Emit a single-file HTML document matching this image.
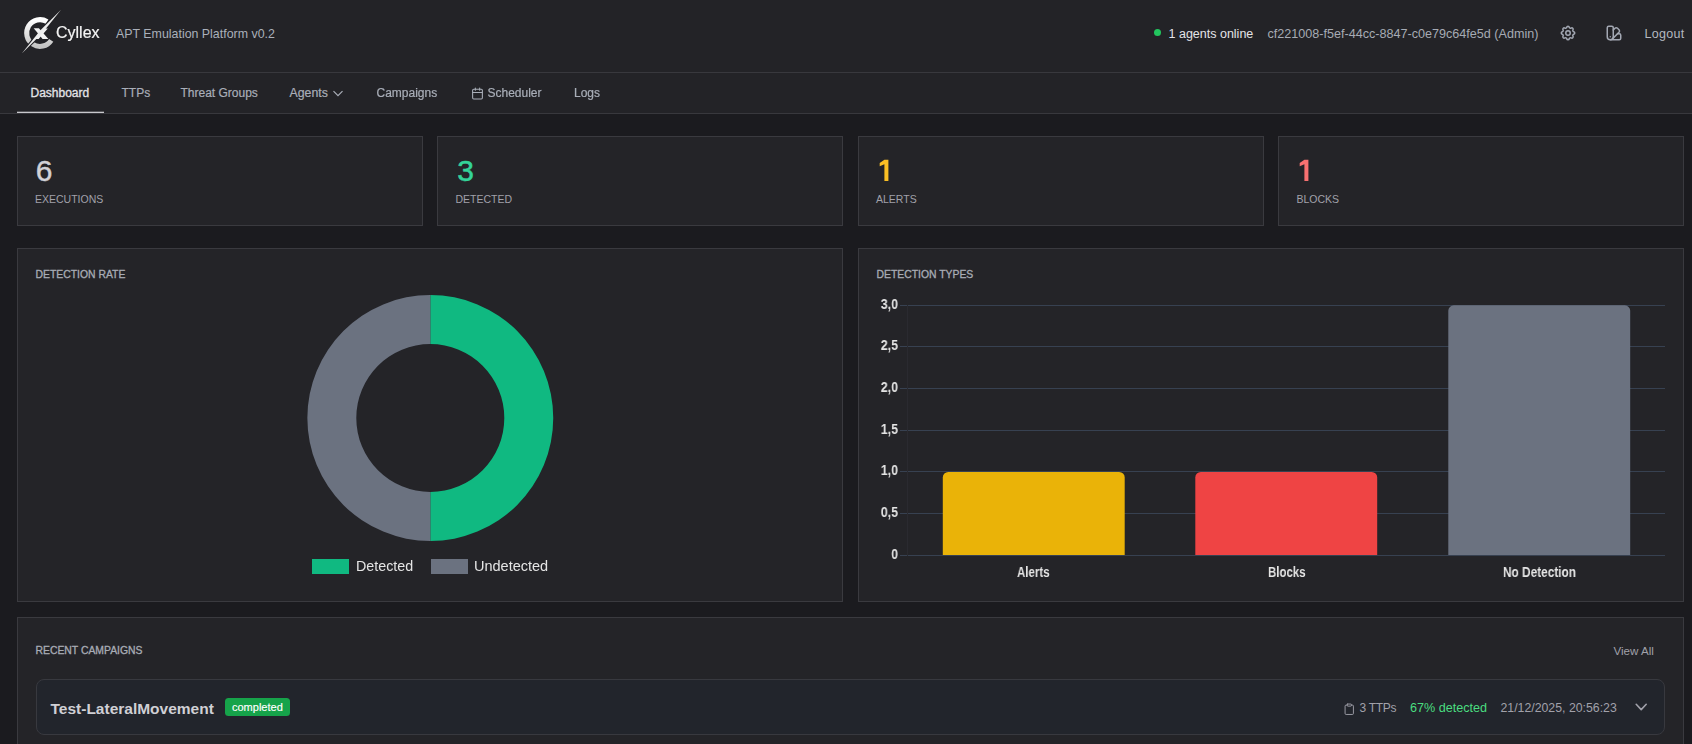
<!DOCTYPE html>
<html><head><meta charset="utf-8">
<style>
*{margin:0;padding:0;box-sizing:border-box}
html,body{width:1692px;height:744px;overflow:hidden;background:#1b1b1f;font-family:"Liberation Sans",sans-serif;}
#hdr{position:absolute;left:0;top:0;width:1692px;height:73px;background:#232327;border-bottom:1px solid #38383d}
#nav{position:absolute;left:0;top:73px;width:1692px;height:41px;background:#232327;border-bottom:1px solid #38383d}
.card{position:absolute;background:#242428;border:1px solid #3a3a3f}
.t{position:absolute;white-space:nowrap;line-height:1}
svg{position:absolute;overflow:visible}
</style></head><body>
<div id="hdr"></div>
<div id="nav"></div>

<!-- logo -->
<svg style="left:0;top:0" width="70" height="60" viewBox="0 0 70 60">
  <defs>
    <linearGradient id="lg" x1="0" y1="0" x2="0" y2="1">
      <stop offset="0" stop-color="#ffffff"/>
      <stop offset="1" stop-color="#c4c4c4"/>
    </linearGradient>
  </defs>
  <path d="M47.07 21.68 A13.35 13.35 0 1 0 51.2 40.27" fill="none" stroke="url(#lg)" stroke-width="5"/>
  <path d="M21.8 53.5 L42.6 32.8 L61 9.8 L40.2 30.5 Z" fill="none" stroke="#232327" stroke-width="2.2" stroke-linejoin="round"/>
  <path d="M33.7 28.3 L38.9 28.3 L48.4 38.9 L42.6 38.9 Z" fill="#f4f4f4"/>
  <path d="M34.2 38.9 L38.6 38.9 L47.8 28.4 L43.4 28.4 Z" fill="#f4f4f4"/>
  <path d="M21.8 53.5 L42.6 32.8 L61 9.8 L40.2 30.5 Z" fill="#eeeeee"/>
</svg>
<div class="t" id="t_cyllex" style="will-change:transform;left:55.7px;top:24.5px;font-size:16px;color:#f4f4f4;-webkit-text-stroke:0.2px #f4f4f4">Cyllex</div>
<div class="t" id="t_apt" style="left:116px;top:27.5px;font-size:12.4px;color:#aab0ba">APT Emulation Platform v0.2</div>

<!-- header right -->
<div style="position:absolute;left:1154px;top:29px;width:7px;height:7px;border-radius:50%;background:#22c55e"></div>
<div class="t" id="t_online" style="left:1168.5px;top:27.5px;font-size:12.5px;color:#e4e4e7">1 agents online</div>
<div class="t" id="t_uuid" style="left:1267.5px;top:27.5px;font-size:12.6px;color:#a6abb4">cf221008-f5ef-44cc-8847-c0e79c64fe5d (Admin)</div>
<!-- gear (tabler settings) -->
<svg style="left:1559px;top:24px" width="18" height="18" viewBox="0 0 24 24" fill="none" stroke="#a3a8b3" stroke-width="2" stroke-linecap="round" stroke-linejoin="round">
  <path d="M10.325 4.317c.426 -1.756 2.924 -1.756 3.35 0a1.724 1.724 0 0 0 2.573 1.066c1.543 -.94 3.31 .826 2.37 2.37a1.724 1.724 0 0 0 1.065 2.572c1.756 .426 1.756 2.924 0 3.35a1.724 1.724 0 0 0 -1.066 2.573c.94 1.543 -.826 3.31 -2.37 2.37a1.724 1.724 0 0 0 -2.572 1.065c-.426 1.756 -2.924 1.756 -3.35 0a1.724 1.724 0 0 0 -2.573 -1.066c-1.543 .94 -3.31 -.826 -2.37 -2.37a1.724 1.724 0 0 0 -1.065 -2.572c-1.756 -.426 -1.756 -2.924 0 -3.35a1.724 1.724 0 0 0 1.066 -2.573c-.94 -1.543 .826 -3.31 2.37 -2.37c1 .608 2.296 .07 2.572 -1.065z"/>
  <path d="M9 12a3 3 0 1 0 6 0a3 3 0 0 0 -6 0"/>
</svg>
<!-- swatch book (lucide) -->
<svg style="left:1605px;top:24px" width="18" height="18" viewBox="0 0 24 24" fill="none" stroke="#a3a8b3" stroke-width="2" stroke-linecap="round" stroke-linejoin="round">
  <path d="M11 17a4 4 0 0 1-8 0V5a2 2 0 0 1 2-2h4a2 2 0 0 1 2 2Z"/>
  <path d="M16.7 13H19a2 2 0 0 1 2 2v4a2 2 0 0 1-2 2H7"/>
  <path d="M7 17h.01"/>
  <path d="m11 8 2.3-2.3a2.4 2.4 0 0 1 3.404.004L18.6 7.6a2.4 2.4 0 0 1 .026 3.434L9.9 19.8"/>
</svg>
<div class="t" id="t_logout" style="left:1644.5px;top:27.8px;font-size:12.5px;letter-spacing:0.3px;color:#b4b8c0">Logout</div>

<!-- nav -->
<div class="t" id="n_dash" style="left:30.5px;top:86.8px;font-size:12px;color:#e4e4e7;-webkit-text-stroke:0.3px #e4e4e7">Dashboard</div>
<div style="position:absolute;left:17px;top:111px;width:87px;height:2px;background:linear-gradient(rgba(200,200,204,.3) 50%,#c8c8cc 50%)"></div>
<div class="t" id="n_ttps" style="-webkit-text-stroke:0.2px #a9aeb8;left:121.5px;top:86.8px;font-size:12px;color:#a9aeb8">TTPs</div>
<div class="t" id="n_tg" style="-webkit-text-stroke:0.2px #a9aeb8;left:180.5px;top:86.8px;font-size:12px;color:#a9aeb8">Threat Groups</div>
<div class="t" id="n_ag" style="-webkit-text-stroke:0.2px #a9aeb8;left:289.5px;top:86.8px;font-size:12.3px;color:#a9aeb8">Agents</div>
<svg style="left:0;top:0" width="1" height="1"><polyline points="333.5,91.2 338,95.7 342.5,91.2" fill="none" stroke="#a9aeb8" stroke-width="1.2"/></svg>
<div class="t" id="n_camp" style="-webkit-text-stroke:0.2px #a9aeb8;left:376.5px;top:86.8px;font-size:12px;color:#a9aeb8">Campaigns</div>
<svg style="left:470.5px;top:86.8px" width="13" height="13" viewBox="0 0 24 24" fill="none" stroke="#a9aeb8" stroke-width="2" stroke-linecap="round" stroke-linejoin="round">
  <path d="M8 2v4"/><path d="M16 2v4"/><rect width="18" height="18" x="3" y="4" rx="2"/><path d="M3 10h18"/>
</svg>
<div class="t" id="n_sch" style="-webkit-text-stroke:0.2px #a9aeb8;left:487.5px;top:86.8px;font-size:12px;color:#a9aeb8">Scheduler</div>
<div class="t" id="n_logs" style="-webkit-text-stroke:0.2px #a9aeb8;left:574px;top:86.8px;font-size:12px;color:#a9aeb8">Logs</div>

<!-- stat cards -->
<div class="card" style="left:17px;top:136px;width:406px;height:90px"></div>
<div class="card" style="left:437px;top:136px;width:406px;height:90px"></div>
<div class="card" style="left:858px;top:136px;width:406px;height:90px"></div>
<div class="card" style="left:1278px;top:136px;width:406px;height:90px"></div>
<div class="t" id="s1n" style="left:35.8px;top:156px;font-size:30px;color:#d2d2d7;-webkit-text-stroke:0.45px #d2d2d7">6</div>
<div class="t" id="s2n" style="left:457.3px;top:156px;font-size:30px;color:#34d399;-webkit-text-stroke:0.5px #34d399">3</div>
<svg style="left:0;top:0" width="1" height="1">
  <path d="M884.4 159.8 H888.4 V181 H884.4 V164.2 L879.7 166.3 V162.9 Z" fill="#fbbf24"/>
  <path d="M1304.4 159.8 H1308.4 V181 H1304.4 V164.2 L1299.7 166.3 V162.9 Z" fill="#f87171"/>
</svg>
<div class="t" id="s1l" style="left:35px;top:194px;font-size:10.5px;color:#a1a1aa">EXECUTIONS</div>
<div class="t" id="s2l" style="left:455.5px;top:194px;font-size:10.5px;color:#a1a1aa">DETECTED</div>
<div class="t" id="s3l" style="left:876px;top:194px;font-size:10.5px;color:#a1a1aa">ALERTS</div>
<div class="t" id="s4l" style="left:1296.5px;top:194px;font-size:10.5px;color:#a1a1aa">BLOCKS</div>

<!-- chart cards -->
<div class="card" style="left:17px;top:248px;width:826px;height:354px"></div>
<div class="card" style="left:858px;top:248px;width:826px;height:354px"></div>
<div class="t" id="c1t" style="left:35.5px;top:270px;font-size:10.4px;color:#a8acb5;-webkit-text-stroke:0.3px #a8acb5">DETECTION RATE</div>
<div class="t" id="c2t" style="left:876.5px;top:270px;font-size:10.4px;color:#a8acb5;-webkit-text-stroke:0.3px #a8acb5">DETECTION TYPES</div>

<!-- donut -->
<svg style="left:0;top:0" width="1" height="1">
  <path d="M430.3 295 A123 123 0 0 1 430.3 541 L430.3 492 A74 74 0 0 0 430.3 344 Z" fill="#10b981"/>
  <path d="M430.3 541 A123 123 0 0 1 430.3 295 L430.3 344 A74 74 0 0 0 430.3 492 Z" fill="#6b7280"/>
</svg>
<div style="position:absolute;left:312px;top:559px;width:36.5px;height:14.5px;background:#10b981"></div>
<div class="t" id="lg1" style="will-change:transform;left:355.5px;top:558.5px;font-size:14.3px;color:#e5e5e5">Detected</div>
<div style="position:absolute;left:431px;top:559px;width:36.5px;height:14.5px;background:#6b7280"></div>
<div class="t" id="lg2" style="will-change:transform;left:474px;top:558.5px;font-size:14.5px;color:#e5e5e5">Undetected</div>

<!-- bar chart -->
<svg style="left:0;top:0" width="1" height="1">
  <g stroke="#374151" stroke-width="1">
    <line x1="900" y1="305.5" x2="1665" y2="305.5"/>
    <line x1="900" y1="346.5" x2="1665" y2="346.5"/>
    <line x1="900" y1="388.5" x2="1665" y2="388.5"/>
    <line x1="900" y1="430.5" x2="1665" y2="430.5"/>
    <line x1="900" y1="471.5" x2="1665" y2="471.5"/>
    <line x1="900" y1="513.5" x2="1665" y2="513.5"/>
    <line x1="900" y1="555.5" x2="1665" y2="555.5"/>
  </g>
  <line x1="907.5" y1="305" x2="907.5" y2="556" stroke="#2a2a30" stroke-width="1"/>
  <path d="M942.8 555 V477.5 a5.5 5.5 0 0 1 5.5 -5.5 H1119.2 a5.5 5.5 0 0 1 5.5 5.5 V555 Z" fill="#eab308"/>
  <path d="M1195.3 555 V477.5 a5.5 5.5 0 0 1 5.5 -5.5 H1371.7 a5.5 5.5 0 0 1 5.5 5.5 V555 Z" fill="#ef4444"/>
  <path d="M1448.3 555 V310.8 a5.5 5.5 0 0 1 5.5 -5.5 H1624.7 a5.5 5.5 0 0 1 5.5 5.5 V555 Z" fill="#6b7280"/>
</svg>
<div class="t" id="y30" style="will-change:transform;left:857.5px;width:40px;text-align:right;top:297.3px;font-size:14px;font-weight:700;color:#e5e5e5;transform:scaleX(.88);transform-origin:100% 0">3,0</div>
<div class="t" id="y25" style="will-change:transform;left:857.5px;width:40px;text-align:right;top:338.3px;font-size:14px;font-weight:700;color:#e5e5e5;transform:scaleX(.88);transform-origin:100% 0">2,5</div>
<div class="t" id="y20" style="will-change:transform;left:857.5px;width:40px;text-align:right;top:380.3px;font-size:14px;font-weight:700;color:#e5e5e5;transform:scaleX(.88);transform-origin:100% 0">2,0</div>
<div class="t" id="y15" style="will-change:transform;left:857.5px;width:40px;text-align:right;top:422.3px;font-size:14px;font-weight:700;color:#e5e5e5;transform:scaleX(.88);transform-origin:100% 0">1,5</div>
<div class="t" id="y10" style="will-change:transform;left:857.5px;width:40px;text-align:right;top:463.3px;font-size:14px;font-weight:700;color:#e5e5e5;transform:scaleX(.88);transform-origin:100% 0">1,0</div>
<div class="t" id="y05" style="will-change:transform;left:857.5px;width:40px;text-align:right;top:505.3px;font-size:14px;font-weight:700;color:#e5e5e5;transform:scaleX(.88);transform-origin:100% 0">0,5</div>
<div class="t" id="y00" style="will-change:transform;left:857.5px;width:40px;text-align:right;top:547.3px;font-size:14px;font-weight:700;color:#e5e5e5;transform:scaleX(.88);transform-origin:100% 0">0</div>
<div class="t" id="xa" style="will-change:transform;left:1017px;top:565px;font-size:14px;font-weight:700;color:#e5e5e5;transform:scaleX(.82);transform-origin:0 0">Alerts</div>
<div class="t" id="xb" style="will-change:transform;left:1267.5px;top:565px;font-size:14px;font-weight:700;color:#e5e5e5;transform:scaleX(.82);transform-origin:0 0">Blocks</div>
<div class="t" id="xc" style="will-change:transform;left:1503px;top:565px;font-size:14px;font-weight:700;color:#e5e5e5;transform:scaleX(.845);transform-origin:0 0">No Detection</div>

<!-- recent -->
<div class="card" style="left:17px;top:617px;width:1667px;height:140px"></div>
<div class="t" id="rt" style="left:35.5px;top:646px;font-size:10.4px;color:#a8acb5;-webkit-text-stroke:0.3px #a8acb5">RECENT CAMPAIGNS</div>
<div class="t" id="va" style="left:1613.5px;top:644.5px;font-size:11.6px;color:#a1a1aa">View All</div>
<div style="position:absolute;left:36px;top:679px;width:1629px;height:56px;border-radius:8px;background:#22252c;border:1px solid #38393f"></div>
<div class="t" id="rn" style="left:50.5px;top:700.8px;font-size:15.5px;font-weight:700;color:#d0d0d5">Test-LateralMovement</div>
<div style="position:absolute;left:225px;top:698px;width:65px;height:18px;border-radius:3.5px;background:#16a34a"></div>
<div class="t" id="bd" style="left:232px;top:701.8px;font-size:11px;color:#ffffff;-webkit-text-stroke:0.15px #fff">completed</div>
<svg style="left:1343px;top:702.6px" width="12.5" height="12.5" viewBox="0 0 24 24" fill="none" stroke="#a1a1aa" stroke-width="1.8" stroke-linecap="round" stroke-linejoin="round">
  <rect width="8" height="4" x="8" y="2" rx="1" ry="1"/><path d="M16 4h2a2 2 0 0 1 2 2v14a2 2 0 0 1-2 2H6a2 2 0 0 1-2-2V6a2 2 0 0 1 2-2h2"/>
</svg>
<div class="t" id="r3" style="left:1359.5px;top:702.3px;font-size:12px;letter-spacing:-0.3px;color:#a1a1aa">3 TTPs</div>
<div class="t" id="r67" style="left:1410px;top:702px;font-size:12.6px;color:#4ade80">67% detected</div>
<div class="t" id="rdt" style="left:1500.5px;top:702px;font-size:12.3px;color:#a1a1aa">21/12/2025, 20:56:23</div>
<svg style="left:0;top:0" width="1" height="1"><polyline points="1636.2,704.3 1641.2,709.6 1646.2,704.3" fill="none" stroke="#a1a1aa" stroke-width="1.6" stroke-linecap="round" stroke-linejoin="round"/></svg>

</body></html>
